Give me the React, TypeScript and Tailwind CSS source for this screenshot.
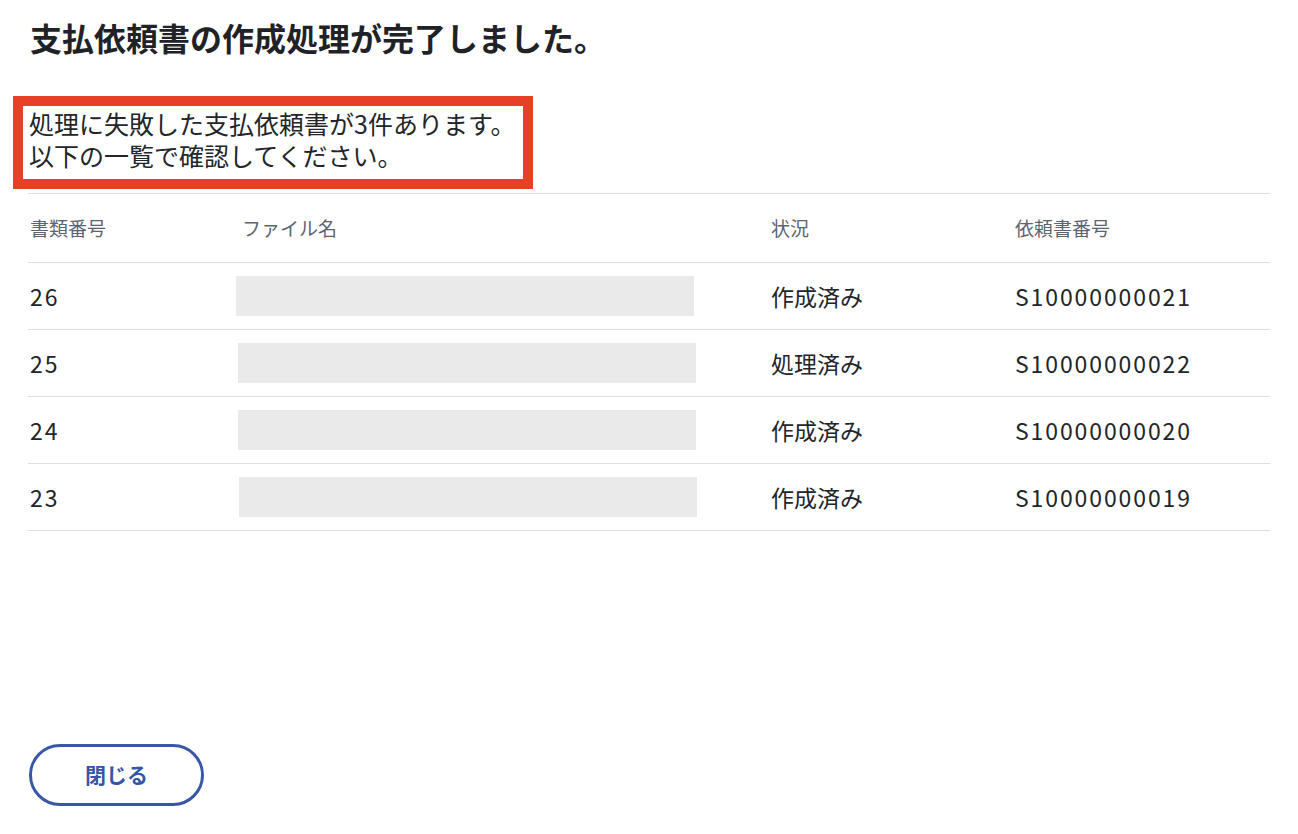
const rows = [
  { no: "26", status: "作成済み", req: "S10000000021", shift: "ml-[-2px]" },
  { no: "25", status: "処理済み", req: "S10000000022", shift: "ml-0" },
  { no: "24", status: "作成済み", req: "S10000000020", shift: "ml-0" },
  { no: "23", status: "作成済み", req: "S10000000019", shift: "ml-[1px]" },
];

const App = () => {
  return (
    <div
      className="min-h-screen bg-white text-[#222529] px-[28px] pt-[16px] pb-[28px] flex flex-col"
      style={{ fontFamily: '"Noto Sans CJK JP", "Noto Sans", sans-serif' }}
    >
      <h1 className="pl-[2px] text-[32px] leading-[42px] font-bold text-[#1f2226]">
        支払依頼書の作成処理が完了しました。
      </h1>

      {/* failed notice */}
      <div className="mt-[38px] -ml-[15px] w-[520px] border-[10px] border-[#e64028] pl-[6px] pt-[1px] pb-[8px] text-[25px] leading-[32px] whitespace-nowrap">
        <p>処理に失敗した支払依頼書が3件あります。</p>
        <p>以下の一覧で確認してください。</p>
      </div>

      <div className="mt-[4px] border-t border-[#dcdfe5]">
        <div className="grid grid-cols-[210px_532px_243px_1fr] h-[69px] items-center border-b border-[#dcdfe5] text-[19px] text-[#5b6472]">
          <div className="pl-[2px]">書類番号</div>
          <div className="pl-[4px]">ファイル名</div>
          <div className="pl-[1px]">状況</div>
          <div className="pl-[2px]">依頼書番号</div>
        </div>
        {rows.map((r) => (
          <div
            key={r.no}
            className="grid grid-cols-[210px_532px_243px_1fr] h-[67px] items-center border-b border-[#dcdfe5] text-[23px]"
          >
            <div className="pl-[2px] tracking-[2px]">{r.no}</div>
            <div>
              <div className={`h-[40px] w-[458px] bg-[#eaeaea] ${r.shift}`} />
            </div>
            <div className="pl-[1px]">{r.status}</div>
            <div className="pl-[2px] tracking-[1.9px]">{r.req}</div>
          </div>
        ))}
      </div>

      <div className="mt-[213px]">
        <button className="ml-[1px] w-[175px] h-[62px] rounded-full border-[3px] border-[#3a57a7] text-[#3556a8] text-[21px] font-bold">
          閉じる
        </button>
      </div>
    </div>
  );
};

export default App;
